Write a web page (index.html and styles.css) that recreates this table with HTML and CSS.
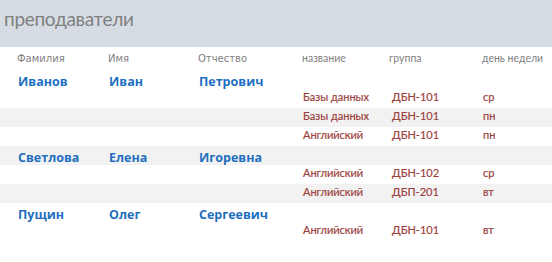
FILE: index.html
```html
<!DOCTYPE html>
<html lang="ru">
<head>
<meta charset="utf-8">
<link rel="stylesheet" href="styles.css">
</head>
<body>
<div class="report-head"><h1 class="title">преподаватели</h1></div>
<div class="row labels">
  <span>Фамилия</span><span>Имя</span><span>Отчество</span>
  <span class="lc">название</span><span class="lc">группа</span><span class="lc">день недели</span>
</div>

<div class="row group">
  <span>Иванов</span><span>Иван</span><span>Петрович</span>
</div>
<div class="row detail">
  <span></span><span></span><span></span><span>Базы данных</span><span>ДБН-101</span><span>ср</span>
</div>
<div class="row detail alt">
  <span></span><span></span><span></span><span>Базы данных</span><span>ДБН-101</span><span>пн</span>
</div>
<div class="row detail">
  <span></span><span></span><span></span><span>Английский</span><span>ДБН-101</span><span>пн</span>
</div>

<div class="row group alt">
  <span>Светлова</span><span>Елена</span><span>Игоревна</span>
</div>
<div class="row detail">
  <span></span><span></span><span></span><span>Английский</span><span>ДБН-102</span><span>ср</span>
</div>
<div class="row detail alt">
  <span></span><span></span><span></span><span>Английский</span><span>ДБП-201</span><span>вт</span>
</div>

<div class="row group">
  <span>Пущин</span><span>Олег</span><span>Сергеевич</span>
</div>
<div class="row detail">
  <span></span><span></span><span></span><span>Английский</span><span>ДБН-101</span><span>вт</span>
</div>
</body>
</html>
```

FILE: styles.css
```css
html, body {
  margin: 0;
  padding: 0;
  background: #ffffff;
}
body {
  width: 552px;
  height: 262px;
  overflow: hidden;
}
.report-head {
  height: 47px;
  background: #d6dce4;
  box-sizing: border-box;
  padding: 6px 0 0 4px;
}
.title {
  margin: 0;
  font-family: "Lato", "Open Sans", sans-serif;
  font-weight: 400;
  font-size: 19px;
  letter-spacing: -0.3px;
  line-height: 26px;
  color: #808080;
}
.row {
  display: grid;
  grid-template-columns: 91px 90px 104px 87px 93px 1fr;
  padding-left: 17px;
  height: 19px;
  overflow: hidden;
  white-space: nowrap;
}
.alt {
  background: #f2f2f2;
}
.labels {
  height: 23px;
  box-sizing: border-box;
  padding-top: 5px;
  font-family: "DejaVu Sans", sans-serif;
  font-size: 10px;
  line-height: 13px;
  color: #7f7f7f;
}
.labels .lc {
  font-family: "Lato", "Open Sans", sans-serif;
  font-size: 10.5px;
}
.group {
  font-family: "Open Sans", sans-serif;
  font-weight: 700;
  font-size: 12.5px;
  line-height: 19px;
  padding-top: 2px;
  box-sizing: border-box;
  color: #1e6fbf;
}
.group span {
  padding-left: 1px;
}
.detail {
  font-family: "Lato", "Open Sans", sans-serif;
  font-weight: 400;
  font-size: 11px;
  line-height: 16px;
  color: #9c423e;
  -webkit-text-stroke: 0.2px #9c423e;
}
.detail span:nth-child(4) {
  padding-left: 1px;
}
.detail span:nth-child(5) {
  padding-left: 3px;
}
.detail span:nth-child(6) {
  padding-left: 1px;
}
```
